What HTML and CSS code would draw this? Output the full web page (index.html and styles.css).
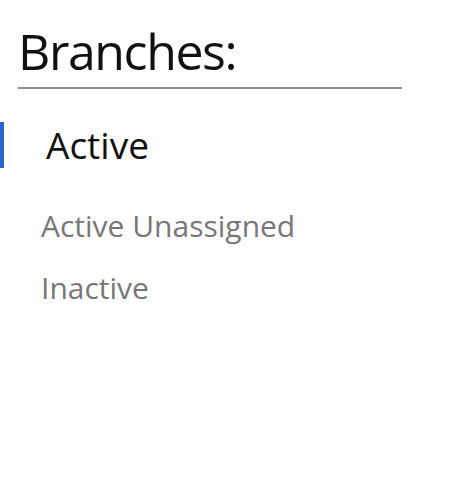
FILE: index.html
```html
<!DOCTYPE html>
<html>
<head>
<meta charset="utf-8">
<link rel="stylesheet" href="styles.css">
</head>
<body>
<div class="page">
  <div class="header">
    <h1 class="title">Branches:</h1>
  </div>
  <ul class="nav">
    <li class="nav-item active">Active</li>
    <li class="nav-item">Active Unassigned</li>
    <li class="nav-item">Inactive</li>
  </ul>
</div>
</body>
</html>
```
FILE: styles.css
```css
html, body {
  margin: 0;
  padding: 0;
  background: #ffffff;
}
.page {
  width: 450px;
  height: 487px;
  padding-top: 21px;
  box-sizing: border-box;
  font-family: "Open Sans", "Noto Sans", sans-serif;
}
.header {
  margin-left: 18px;
  width: 384px;
  border-bottom: 2px solid #8e8e8e;
  padding-bottom: 6px;
}
.title {
  margin: 0;
  font-size: 50px;
  line-height: 60px;
  font-weight: 400;
  letter-spacing: -1.4px;
  color: #111111;
}
.nav {
  list-style: none;
  margin: 33px 0 0 0;
  padding: 0;
  display: flex;
  flex-direction: column;
  gap: 22px;
}
.nav-item {
  font-size: 30px;
  line-height: 40px;
  padding-left: 41px;
  color: #777777;
}
.nav-item.active {
  font-size: 37px;
  line-height: 46px;
  padding-left: 42px;
  border-left: 4px solid #2d63cc;
  color: #111111;
  margin-bottom: 16px;
}
```
